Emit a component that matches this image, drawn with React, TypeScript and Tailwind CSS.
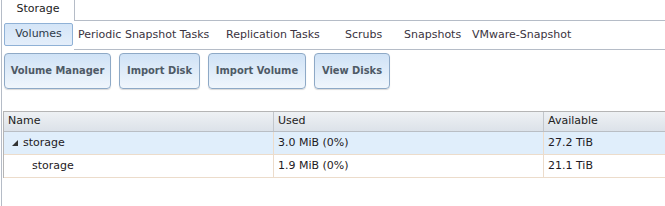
const subTabs = [
  { label: 'Periodic Snapshot Tasks', w: 'w-[148px]' },
  { label: 'Replication Tasks', w: 'w-[119px]' },
  { label: 'Scrubs', w: 'w-[59px]' },
  { label: 'Snapshots', w: 'w-[68px]' },
  { label: 'VMware-Snapshot', w: 'w-[120px]' },
];

const actions = [
  { label: 'Volume Manager', w: 'w-[107px]' },
  { label: 'Import Disk', w: 'w-[81px]' },
  { label: 'Import Volume', w: 'w-[98px]' },
  { label: 'View Disks', w: 'w-[76px]' },
];

const rows = [
  { name: 'storage', used: '3.0 MiB (0%)', avail: '27.2 TiB', parent: true },
  { name: 'storage', used: '1.9 MiB (0%)', avail: '21.1 TiB', parent: false },
];

const App = () => {
  return (
    <div className="w-[665px] h-[206px] bg-white overflow-hidden font-['DejaVu_Sans',Verdana,sans-serif] text-[11px] text-[#333]">
      {/* top tab strip */}
      <div className="flex h-[21px]">
        <div className="w-[74px] h-[21px] ml-[1px] border-l border-r border-[#b5bcc7] bg-white flex items-center justify-center pb-[3px] text-[#222]">
          Storage
        </div>
        <div className="flex-1 border-b border-[#b5bcc7]" />
      </div>

      <div className="ml-[1px] border-l border-[#b5bcc7] h-[185px]">
        {/* sub tabs */}
        <div className="flex h-[29px]">
          <div className="w-[72px] pt-[2px] pl-[2px]">
            <div className="w-[69px] h-[23px] rounded-[2px] border border-[#8fb1d6] bg-gradient-to-b from-[#d4e5f7] to-[#e4eefa] flex items-center justify-center text-[#2d3a48]">
              Volumes
            </div>
          </div>
          <div className="flex-1 flex items-start pt-[6px] pl-[4px] border-b border-[#b5bcc7]">
            {subTabs.map(t => (
              <div key={t.label} className={`${t.w} shrink-0 whitespace-nowrap text-[#3a3340]`}>
                {t.label}
              </div>
            ))}
          </div>
        </div>

        {/* action buttons */}
        <div className="flex gap-[8px] pl-[2px] pt-[3px] h-[61px]">
          {actions.map(a => (
            <div
              key={a.label}
              className={`${a.w} h-[36px] shrink-0 rounded-[4px] border border-[#8ea9c6] bg-gradient-to-b from-[#cfe2f6] to-[#f0f6fc] shadow-[0_1px_1px_rgba(0,0,0,0.15)] flex items-center justify-center font-bold font-['DejaVu_Sans_Condensed','Liberation_Sans',sans-serif] text-[#4e5a66] whitespace-nowrap`}
            >
              {a.label}
            </div>
          ))}
        </div>

        {/* grid */}
        <div className="ml-[1px] border-l border-t border-[#b5b5b5]">
          <div className="flex h-[20px] bg-gradient-to-b from-[#eef1f4] to-[#dce2e9] border-b border-[#b9bec4] text-[#222]">
            <div className="w-[270px] shrink-0 border-r border-[#c3c7cc] pl-[4px] flex items-center">Name</div>
            <div className="w-[270px] shrink-0 border-r border-[#c3c7cc] pl-[4px] flex items-center">Used</div>
            <div className="flex-1 pl-[4px] flex items-center">Available</div>
          </div>
          {rows.map((r, i) => (
            <div
              key={i}
              className={`flex h-[23px] border-b border-[#ecdccb] text-[#1e1a24] ${r.parent ? 'bg-[#e0eefb]' : 'bg-white'}`}
            >
              <div className="w-[270px] shrink-0 border-r border-[#ecdccb] flex items-center">
                {r.parent ? (
                  <span className="flex items-center pl-[8px]">
                    <svg width="6" height="6" viewBox="0 0 6 6" className="mr-[5px]">
                      <path d="M6 0 L6 6 L0 6 Z" fill="#333" />
                    </svg>
                    {r.name}
                  </span>
                ) : (
                  <span className="pl-[28px]">{r.name}</span>
                )}
              </div>
              <div className="w-[270px] shrink-0 border-r border-[#ecdccb] pl-[4px] flex items-center">{r.used}</div>
              <div className="flex-1 pl-[4px] flex items-center">{r.avail}</div>
            </div>
          ))}
        </div>
      </div>
    </div>
  );
};

export default App;
